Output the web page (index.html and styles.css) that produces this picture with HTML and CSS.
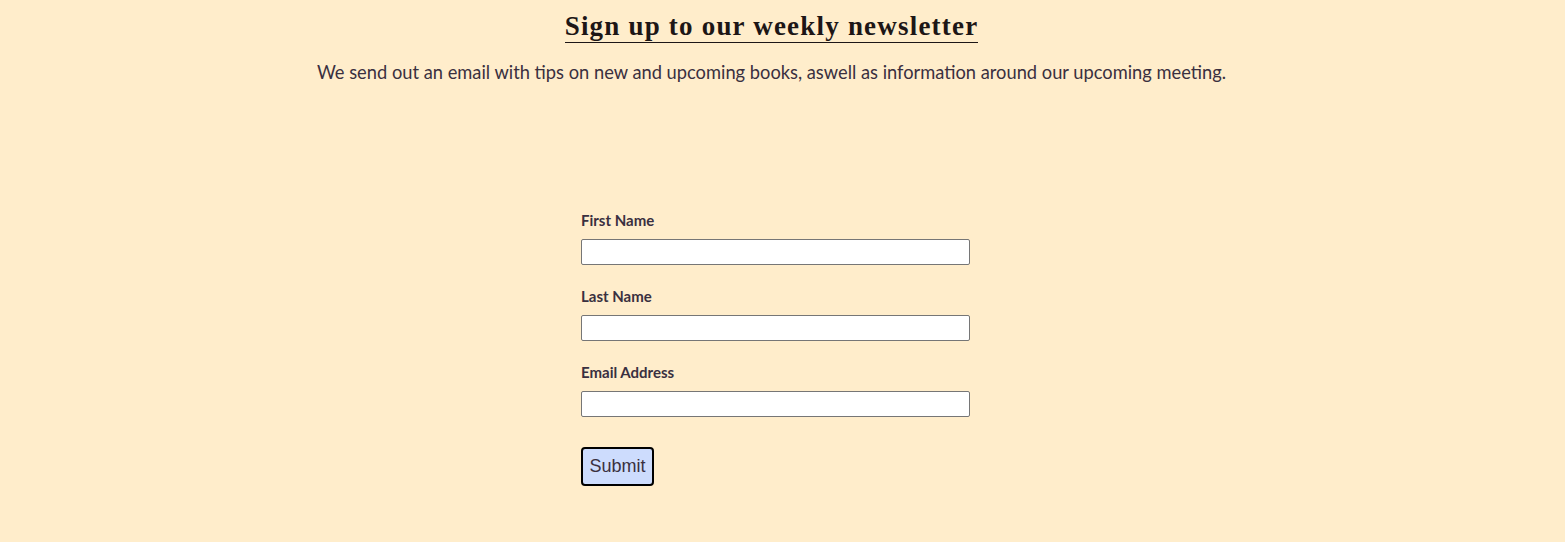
FILE: index.html
```html
<!DOCTYPE html>
<html lang="en">
<head>
<meta charset="utf-8">
<title>Newsletter</title>
<link rel="stylesheet" href="styles.css">
</head>
<body>
<main class="page">
  <section class="intro">
    <h1 class="title"><span class="title-text">Sign up to our weekly newsletter</span></h1>
    <p class="lead">We send out an email with tips on new and upcoming books, aswell as information around our upcoming meeting.</p>
  </section>
  <form class="signup">
    <div class="field">
      <label class="label" for="fn">First Name</label>
      <input class="input" id="fn" type="text">
    </div>
    <div class="field">
      <label class="label" for="ln">Last Name</label>
      <input class="input" id="ln" type="text">
    </div>
    <div class="field">
      <label class="label" for="em">Email Address</label>
      <input class="input" id="em" type="email">
    </div>
    <button class="submit" type="button">Submit</button>
  </form>
</main>
</body>
</html>
```

FILE: styles.css
```css
html, body {
  margin: 0;
  padding: 0;
  background: #ffedcb;
}
body {
  font-family: "Lato", "Open Sans", sans-serif;
  color: #3a3040;
}
.page {
  padding-right: 22px;
  height: 542px;
  box-sizing: border-box;
}
.intro {
  text-align: center;
  padding-top: 10px;
}
.title {
  margin: 0;
  font-family: "Liberation Serif", serif;
  font-size: 27px;
  font-weight: bold;
  letter-spacing: 1.2px;
  line-height: 32px;
  color: #1d1616;
}
.title-text {
  display: inline-block;
  border-bottom: 1px solid #1d1616;
  padding-bottom: 0;
}
.lead {
  margin: 17px 0 0;
  font-size: 18.3px;
  line-height: 24px;
}
.signup {
  width: 381px;
  margin: 127px auto 0;
}
.field {
  display: flex;
  flex-direction: column;
  align-items: flex-start;
  gap: 10px;
  margin-bottom: 22px;
}
.label {
  font-size: 15px;
  font-weight: bold;
  line-height: 18px;
  color: #3a3040;
}
.input {
  width: 389px;
  height: 26px;
  box-sizing: border-box;
  margin: 0;
  border: 1px solid #767676;
  border-radius: 2px;
  background: #fff;
}
.submit {
  margin-top: 8px;
  width: 73px;
  height: 39px;
  box-sizing: border-box;
  border: 2px solid #000;
  border-radius: 4px;
  background: #cddcfd;
  font-family: "Liberation Sans", Arial, sans-serif;
  font-size: 18px;
  color: #3a3040;
  padding: 0;
}
```
